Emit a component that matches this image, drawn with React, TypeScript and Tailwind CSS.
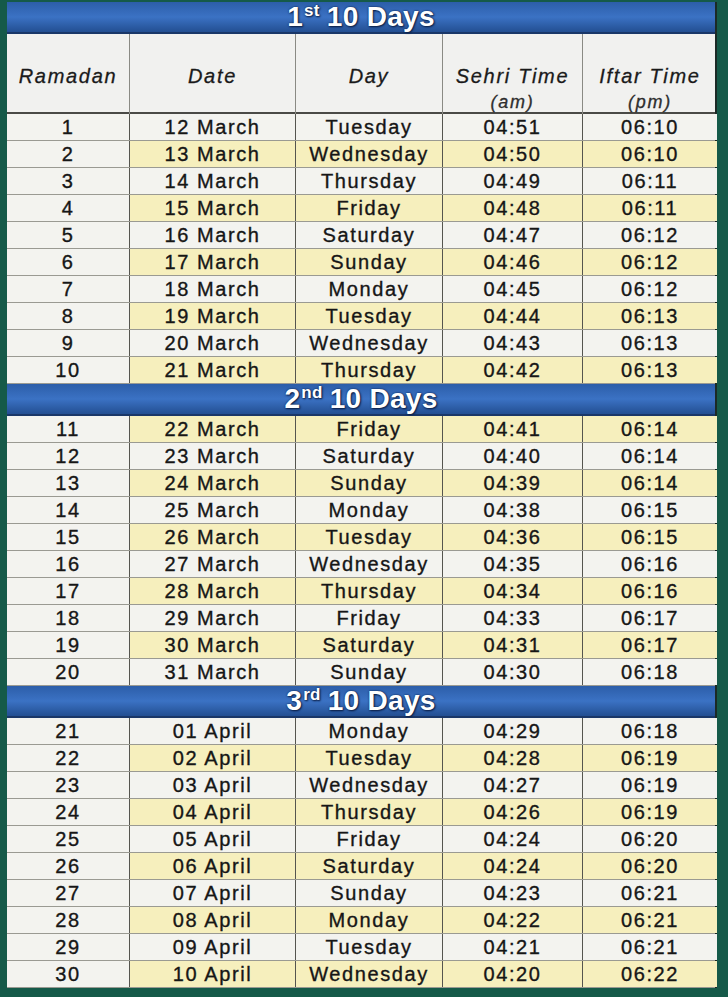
import React from "react";

type Row = [string, string, string, string, string];

const s1: Row[] = [
  ["1", "12 March", "Tuesday", "04:51", "06:10"],
  ["2", "13 March", "Wednesday", "04:50", "06:10"],
  ["3", "14 March", "Thursday", "04:49", "06:11"],
  ["4", "15 March", "Friday", "04:48", "06:11"],
  ["5", "16 March", "Saturday", "04:47", "06:12"],
  ["6", "17 March", "Sunday", "04:46", "06:12"],
  ["7", "18 March", "Monday", "04:45", "06:12"],
  ["8", "19 March", "Tuesday", "04:44", "06:13"],
  ["9", "20 March", "Wednesday", "04:43", "06:13"],
  ["10", "21 March", "Thursday", "04:42", "06:13"],
];
const s2: Row[] = [
  ["11", "22 March", "Friday", "04:41", "06:14"],
  ["12", "23 March", "Saturday", "04:40", "06:14"],
  ["13", "24 March", "Sunday", "04:39", "06:14"],
  ["14", "25 March", "Monday", "04:38", "06:15"],
  ["15", "26 March", "Tuesday", "04:36", "06:15"],
  ["16", "27 March", "Wednesday", "04:35", "06:16"],
  ["17", "28 March", "Thursday", "04:34", "06:16"],
  ["18", "29 March", "Friday", "04:33", "06:17"],
  ["19", "30 March", "Saturday", "04:31", "06:17"],
  ["20", "31 March", "Sunday", "04:30", "06:18"],
];
const s3: Row[] = [
  ["21", "01 April", "Monday", "04:29", "06:18"],
  ["22", "02 April", "Tuesday", "04:28", "06:19"],
  ["23", "03 April", "Wednesday", "04:27", "06:19"],
  ["24", "04 April", "Thursday", "04:26", "06:19"],
  ["25", "05 April", "Friday", "04:24", "06:20"],
  ["26", "06 April", "Saturday", "04:24", "06:20"],
  ["27", "07 April", "Sunday", "04:23", "06:21"],
  ["28", "08 April", "Monday", "04:22", "06:21"],
  ["29", "09 April", "Tuesday", "04:21", "06:21"],
  ["30", "10 April", "Wednesday", "04:20", "06:22"],
];

const grid = "grid grid-cols-[123px_166px_147px_140px_134px]";

function Banner({ num, sup }: { num: string; sup: string }) {
  return (
    <div className="h-[32px] flex items-center justify-center bg-gradient-to-b from-[#2c5ea9] via-[#3b72c4] to-[#234f92] border-b-2 border-[#1a3768]">
      <span
        className="text-white font-bold text-[28px] leading-none tracking-[0.3px] [text-shadow:1px_1px_2px_#0b1e45,0_0_2px_#0b1e45] flex items-start"
      >
        <span>{num}</span>
        <span className="text-[17px] leading-none mt-[-1px] ml-[1px] mr-[7px]">{sup}</span>
        <span>10 Days</span>
      </span>
    </div>
  );
}

function Rows({ rows, yellowEven }: { rows: Row[]; yellowEven: boolean }) {
  return (
    <div>
      {rows.map((r, i) => {
        const yellow = yellowEven ? i % 2 === 0 : i % 2 === 1;
        const bg = yellow ? "bg-[#f6efbd]" : "bg-[#f3f3ef]";
        return (
          <div key={r[0]} className={`${grid} h-[27px] border-b border-[#9a9a92]`}>
            {r.map((c, j) => (
              <div
                key={j}
                className={`flex items-center justify-center text-[20px] leading-none tracking-[1.6px] text-[#161616] [-webkit-text-stroke:0.35px_#161616] ${
                  j === 0 ? "bg-[#f3f3ef]" : bg
                } ${j < 4 ? "border-r border-[#55554f]" : ""}`}
              >
                {c}
              </div>
            ))}
          </div>
        );
      })}
    </div>
  );
}

export default function App() {
  const heads: [string, string?][] = [
    ["Ramadan"],
    ["Date"],
    ["Day"],
    ["Sehri Time", "(am)"],
    ["Iftar Time", "(pm)"],
  ];
  return (
    <div
      className="w-[728px] h-[997px] bg-[#155a49] pt-[2px] pl-[7px]"
      style={{ fontFamily: '"Liberation Sans", Arial, sans-serif' }}
    >
      <div className="w-[710px] border-r-2 border-[#1b2a26]">
        <Banner num="1" sup="st" />
        <div className={`${grid} h-[80px] bg-[#f1f1ef] border-b-2 border-[#4a4a46]`}>
          {heads.map((h, j) => (
            <div
              key={j}
              className={`flex flex-col items-center pt-[29px] italic text-[20px] leading-[26px] tracking-[1.7px] text-[#1a1a1a] [-webkit-text-stroke:0.3px_#1a1a1a] ${
                j < 4 ? "border-r border-[#8a8a84]" : ""
              }`}
            >
              <span>{h[0]}</span>
              {h[1] && <span className="text-[18px] text-[#333]">{h[1]}</span>}
            </div>
          ))}
        </div>
        <Rows rows={s1} yellowEven={false} />
        <Banner num="2" sup="nd" />
        <Rows rows={s2} yellowEven={true} />
        <Banner num="3" sup="rd" />
        <Rows rows={s3} yellowEven={false} />
      </div>
    </div>
  );
}
